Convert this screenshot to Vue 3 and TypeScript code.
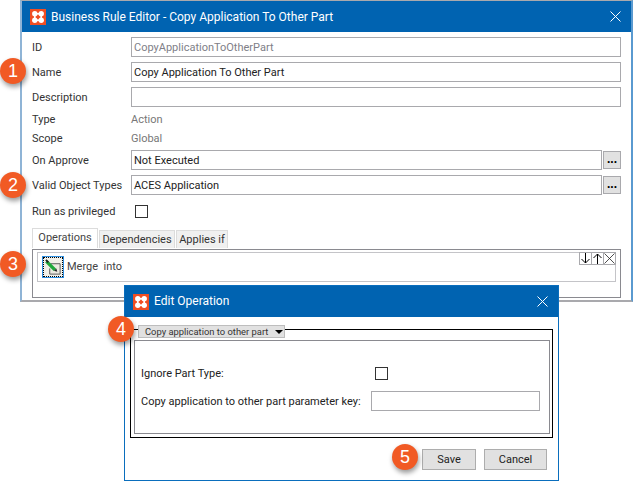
<script setup lang="ts">
const callouts = [
  { n: 1, x: 13, y: 71 },
  { n: 2, x: 13, y: 185 },
  { n: 3, x: 13, y: 264 },
  { n: 4, x: 121, y: 329 },
  { n: 5, x: 405, y: 457 },
]
const tabs = ['Operations', 'Dependencies', 'Applies if']
</script>

<template>
  <div class="desktop">
    <section class="window main-window">
      <header class="titlebar">
        <svg class="logo" viewBox="0 0 16 16">
          <rect width="16" height="16" fill="#f04e23" />
          <g fill="#fff">
            <circle cx="4.8" cy="4.8" r="2.7" />
            <circle cx="11.2" cy="4.8" r="2.7" />
            <circle cx="4.8" cy="11.2" r="2.7" />
            <circle cx="11.2" cy="11.2" r="2.7" />
            <rect x="7" y="4" width="2" height="1.6" />
            <rect x="7" y="10.4" width="2" height="1.6" />
            <rect x="4" y="7" width="1.6" height="2" />
            <rect x="10.4" y="7" width="1.6" height="2" />
          </g>
        </svg>
        <span class="title">Business Rule Editor - Copy Application To Other Part</span>
        <svg class="close" viewBox="0 0 11 11">
          <path d="M.5.5l10 10M10.5.5l-10 10" stroke="#fff" fill="none" />
        </svg>
      </header>

      <div class="form">
        <div class="row field"><label>ID</label><div class="input muted">CopyApplicationToOtherPart</div></div>
        <div class="row field"><label>Name</label><div class="input">Copy Application To Other Part</div></div>
        <div class="row field"><label>Description</label><div class="input"></div></div>
        <div class="row plain type-row"><label>Type</label><span class="value">Action</span></div>
        <div class="row plain scope-row"><label>Scope</label><span class="value">Global</span></div>
        <div class="row field approve-row">
          <label>On Approve</label><div class="input">Not Executed</div><button class="dots">...</button>
        </div>
        <div class="row field">
          <label>Valid Object Types</label><div class="input">ACES Application</div><button class="dots">...</button>
        </div>
        <div class="row check-row"><label>Run as privileged</label><span class="checkbox"></span></div>

        <div class="tabs">
          <div v-for="(tab, i) in tabs" :key="tab" class="tab" :class="{ active: i === 0 }">{{ tab }}</div>
        </div>
        <div class="tab-panel">
          <div class="op-list">
            <div class="op-icon">
              <svg viewBox="0 0 18 18" width="17" height="17">
                <path d="M6 5h10v11H5v-6" fill="#eceae0" stroke="#555" />
                <path d="M1.5 2.5l9 9" stroke="#1fa83a" stroke-width="3.6" />
                <path d="M1 1l2.5 2.5" stroke="#222" stroke-width="2" />
                <path d="M9.5 12.5l3.5 1-1-3.5z" fill="#222" />
              </svg>
            </div>
            <span class="op-text">Merge&nbsp; into</span>
            <div class="op-actions">
              <button class="op-btn">
                <svg viewBox="0 0 11 11"><path d="M5.5 0v10M1.5 6l4 4 4-4" fill="none" stroke="#000" /></svg>
              </button>
              <button class="op-btn">
                <svg viewBox="0 0 11 11"><path d="M5.5 11V1M1.5 5l4-4 4 4" fill="none" stroke="#000" /></svg>
              </button>
              <button class="op-btn">
                <svg viewBox="0 0 11 11"><path d="M.5.5l10 10M10.5.5l-10 10" fill="none" stroke="#222" stroke-width=".8" /></svg>
              </button>
            </div>
          </div>
        </div>
      </div>
    </section>

    <section class="window dialog">
      <header class="titlebar">
        <svg class="logo" viewBox="0 0 16 16">
          <rect width="16" height="16" fill="#f04e23" />
          <g fill="#fff">
            <circle cx="4.8" cy="4.8" r="2.7" />
            <circle cx="11.2" cy="4.8" r="2.7" />
            <circle cx="4.8" cy="11.2" r="2.7" />
            <circle cx="11.2" cy="11.2" r="2.7" />
            <rect x="7" y="4" width="2" height="1.6" />
            <rect x="7" y="10.4" width="2" height="1.6" />
            <rect x="4" y="7" width="1.6" height="2" />
            <rect x="10.4" y="7" width="1.6" height="2" />
          </g>
        </svg>
        <span class="title">Edit Operation</span>
        <svg class="close" viewBox="0 0 11 11">
          <path d="M.5.5l10 10M10.5.5l-10 10" stroke="#fff" fill="none" />
        </svg>
      </header>

      <div class="dialog-body">
        <div class="black-box">
          <div class="legend">
            <span>Copy application to other part</span>
            <i class="caret"></i>
          </div>
          <div class="gray-box">
            <div class="d-row ignore-row"><label>Ignore Part Type:</label><span class="checkbox"></span></div>
            <div class="d-row key-row"><label>Copy application to other part parameter key:</label><div class="input"></div></div>
          </div>
        </div>
        <div class="actions">
          <button class="btn save">Save</button>
          <button class="btn cancel">Cancel</button>
        </div>
      </div>
    </section>

    <div
      v-for="c in callouts"
      :key="c.n"
      class="callout"
      :style="{ left: c.x - 13 + 'px', top: c.y - 13 + 'px' }"
    >{{ c.n }}</div>
  </div>
</template>

<style>
html, body { background: #fff; }
</style>

<style scoped>
.desktop {
  position: relative;
  width: 634px;
  height: 481px;
  overflow: hidden;
  background: #fff;
  font-family: Roboto, "Noto Sans", sans-serif;
  font-size: 11px;
  color: #333;
}
.window {
  position: absolute;
  box-sizing: border-box;
  background: #fff;
}
.main-window {
  left: 20px;
  top: 0;
  width: 613px;
  height: 302px;
  border: 1px solid #a9a9ad;
  border-left: 2px solid #8fb4d6;
  border-right: 2px solid #5a9ad0;
  border-bottom: 2px solid #a9a9ad;
}
.dialog {
  left: 124px;
  top: 285px;
  width: 435px;
  height: 196px;
  border: 1px solid #0a6ebd;
}
.titlebar {
  display: flex;
  align-items: center;
  height: 31px;
  background: #0063b1;
  color: #fff;
  padding: 0 0 0 8px;
}
.logo { width: 16px; height: 16px; flex: none; }
.title { margin-left: 5px; font-size: 12px; flex: 1; white-space: nowrap; }
.dialog .title { margin-top: -2px; }
.close { width: 11px; height: 11px; margin-right: 10px; flex: none; }

.form { padding: 5px 10px 0 10px; }
.row { display: flex; align-items: center; }
.row label { width: 99px; flex: none; white-space: nowrap; }
.field { height: 20px; margin-bottom: 5px; }
.plain { height: 14px; }
.scope-row { margin-top: 5px; margin-bottom: 5px; }
.value { color: #777; }
.input {
  flex: 1;
  box-sizing: border-box;
  height: 20px;
  line-height: 20px;
  padding-left: 2px;
  border: 1px solid #a9a9ad;
  background: #fff;
  color: #222;
  white-space: nowrap;
}
.input.muted { color: #808088; }
.dots {
  width: 18px;
  height: 18px;
  margin-left: 1px;
  flex: none;
  padding: 0 0 5px;
  border: 1px solid #a9a9ad;
  background: #e1e1e1;
  font: bold 12px "Liberation Sans", sans-serif;
  color: #000;
}
.check-row { height: 22px; }
.checkbox {
  display: block;
  box-sizing: border-box;
  width: 13px;
  height: 13px;
  border: 1px solid #333;
  background: #fff;
  flex: none;
}
.check-row .checkbox { margin-left: 4px; }

.tabs {
  display: flex;
  align-items: flex-end;
  height: 20px;
  margin-top: 6px;
}
.tab {
  box-sizing: border-box;
  height: 18px;
  line-height: 17px;
  margin-right: 1px;
  background: #f0f0f0;
  border: 1px solid #dcdcdc;
  border-bottom: none;
  text-align: center;
  white-space: nowrap;
}
.tab:nth-child(1) { width: 66px; }
.tab:nth-child(2) { width: 76px; }
.tab:nth-child(3) { width: 52px; }
.tab.active {
  height: 20px;
  background: #fff;
  color: #444;
}
.tab-panel {
  box-sizing: border-box;
  height: 49px;
  margin-top: 1px;
  padding: 2px 4px 0;
  border: 1px solid #8a8a90;
}
.op-list {
  position: relative;
  box-sizing: border-box;
  display: flex;
  align-items: center;
  height: 30px;
  padding-left: 5px;
  border: 1px solid #c4c4c8;
}
.op-icon {
  box-sizing: border-box;
  width: 20px;
  height: 20px;
  padding: 1px;
  border: 1px dotted #000;
  outline: 1px solid #2f8fe0;
  background: #f2f0e8;
}
.op-icon svg { display: block; }
.op-text { margin-left: 4px; margin-top: -2px; color: #444; }
.op-actions {
  position: absolute;
  top: -1px;
  right: -1px;
  display: flex;
}
.op-btn {
  box-sizing: border-box;
  width: 13px;
  height: 13px;
  margin-left: -1px;
  padding: 0;
  border: 1px solid #a9a9ad;
  background: #fff;
}
.op-btn svg { display: block; width: 11px; height: 11px; }

.dialog-body { padding: 12px 5px 0 5px; }
.black-box {
  position: relative;
  box-sizing: border-box;
  height: 109px;
  padding: 10px 2px 3px 3px;
  border: 1px solid #000;
}
.legend {
  position: absolute;
  left: 7px;
  top: -5px;
  box-sizing: border-box;
  display: flex;
  align-items: center;
  justify-content: space-between;
  width: 147px;
  height: 13px;
  padding: 0 1px 0 6px;
  background: #e1e1e1;
  border: 1px solid #bdbdbd;
  font-size: 9.4px;
  color: #333;
}
.legend span { white-space: nowrap; }
.caret {
  width: 0;
  height: 0;
  border-left: 4px solid transparent;
  border-right: 4px solid transparent;
  border-top: 4px solid #000;
}
.gray-box {
  box-sizing: border-box;
  height: 94px;
  padding: 26px 9px 0 6px;
  border: 1px solid #8a8a90;
}
.d-row { display: flex; align-items: center; color: #222; }
.d-row label { white-space: nowrap; }
.ignore-row { height: 13px; }
.ignore-row label { width: 234px; }
.key-row { height: 20px; margin-top: 11px; }
.key-row label { width: 230px; }
.actions {
  display: flex;
  justify-content: flex-end;
  gap: 8px;
  margin-top: 11px;
  padding-right: 6px;
}
.btn {
  box-sizing: border-box;
  height: 21px;
  padding: 0;
  border: 1px solid #adadad;
  background: #e1e1e1;
  font: inherit;
  color: #222;
}
.save { width: 54px; }
.cancel { width: 63px; }

.callout {
  position: absolute;
  width: 26px;
  height: 26px;
  border-radius: 50%;
  background: #f15a24;
  color: #fff;
  font-family: "Liberation Sans", sans-serif;
  font-size: 18px;
  line-height: 26px;
  text-align: center;
  box-shadow: 1px 3px 5px rgba(0, 0, 0, 0.4);
}
</style>
